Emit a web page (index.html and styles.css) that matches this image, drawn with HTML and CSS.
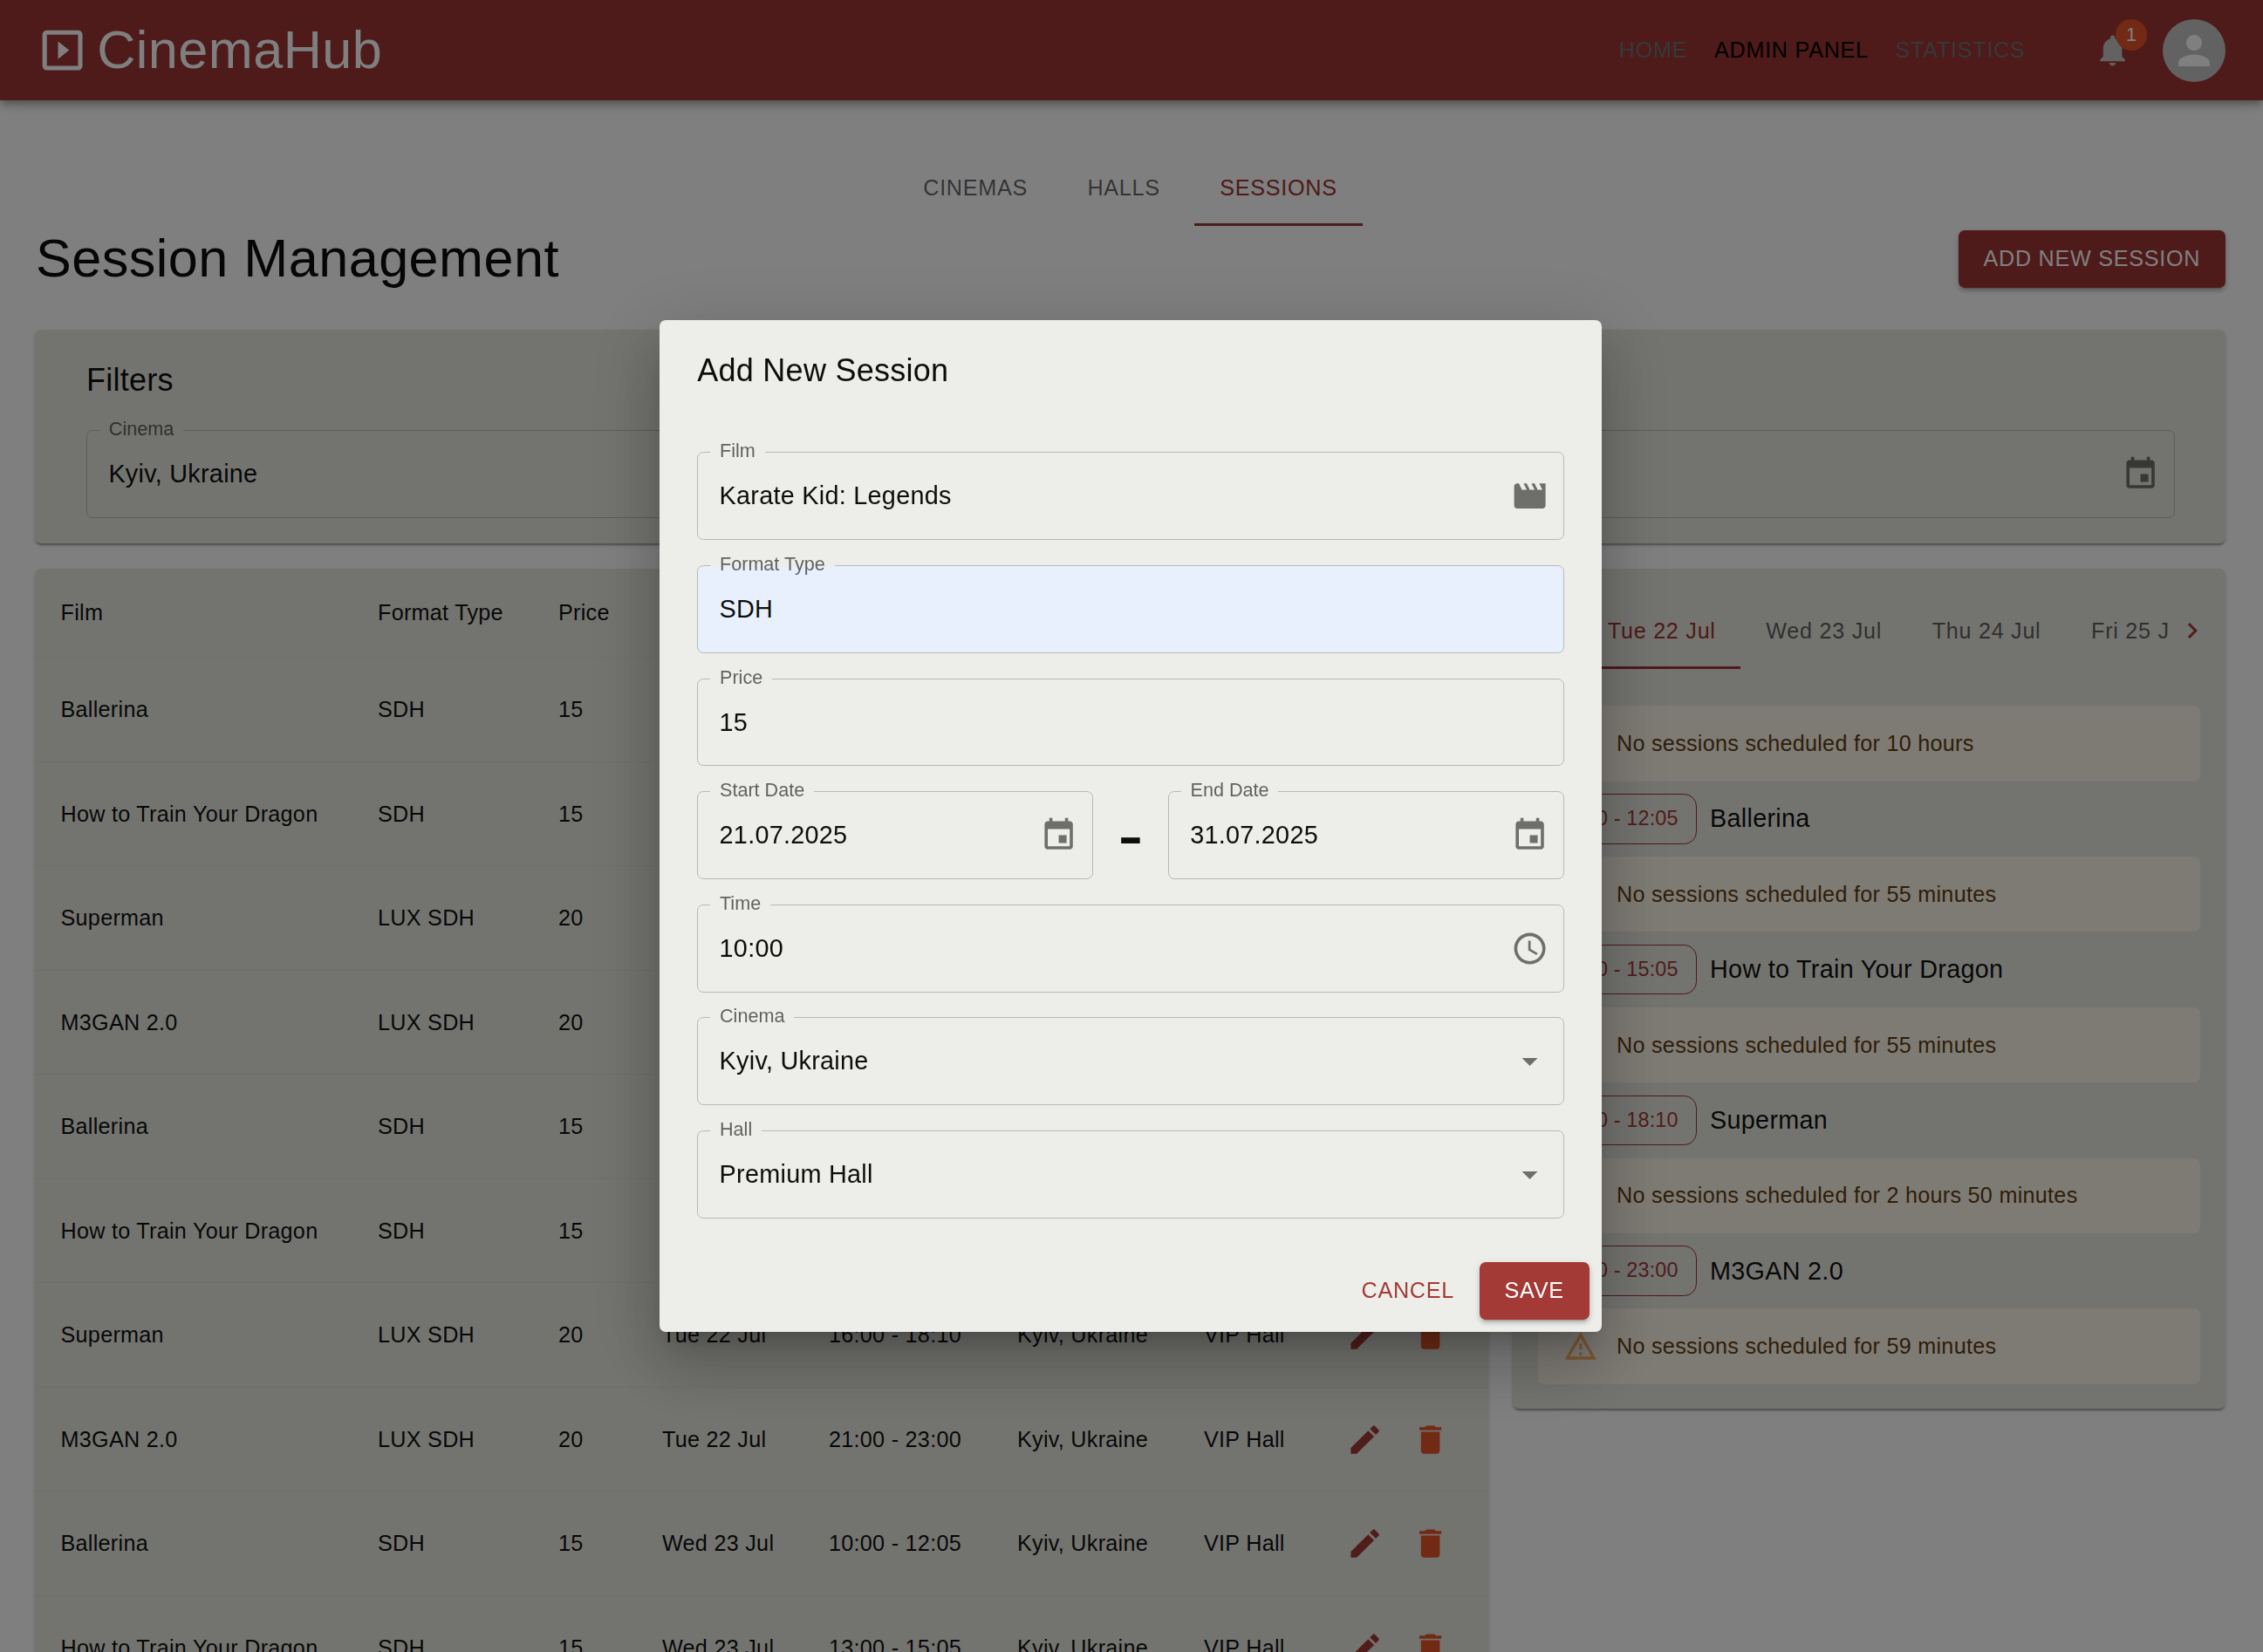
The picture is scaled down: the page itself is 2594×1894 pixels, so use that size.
FILE: index.html
```html
<!DOCTYPE html>
<html lang="en">
<head>
    <meta charset="UTF-8">
    <meta name="viewport" content="width=device-width, initial-scale=1.0">
    <title>CinemaHub - Session Management</title>
    <link rel="stylesheet" href="styles.css">
</head>
<body>

    <header class="appbar">
        <div class="logo">
            <svg class="logo-icon" viewBox="0 0 24 24"><path d="M10 8v8l5-4-5-4zm9-5H5c-1.1 0-2 .9-2 2v14c0 1.1.9 2 2 2h14c1.1 0 2-.9 2-2V5c0-1.1-.9-2-2-2zm0 16H5V5h14v14z"/></svg>
            <span class="logo-text">CinemaHub</span>
        </div>
        <nav class="topnav">
            <a class="topnav-link">Home</a>
            <a class="topnav-link topnav-active">Admin Panel</a>
            <a class="topnav-link">Statistics</a>
        </nav>
        <div class="bell">
            <svg class="icon" viewBox="0 0 24 24"><path d="M12 22c1.1 0 2-.9 2-2h-4c0 1.1.89 2 2 2zm6-6v-5c0-3.07-1.64-5.64-4.5-6.32V4c0-.83-.67-1.5-1.5-1.5s-1.5.67-1.5 1.5v.68C7.63 5.36 6 7.92 6 11v5l-2 2v1h16v-1l-2-2z"/></svg>
            <span class="badge">1</span>
        </div>
        <div class="avatar">
            <svg class="avatar-icon" viewBox="0 0 24 24"><path d="M12 12c2.21 0 4-1.79 4-4s-1.79-4-4-4-4 1.79-4 4 1.79 4 4 4zm0 2c-2.67 0-8 1.34-8 4v2h16v-2c0-2.66-5.33-4-8-4z"/></svg>
        </div>
    </header>

    <main class="page">
        <div class="section-tabs">
            <a class="section-tab">Cinemas</a>
            <a class="section-tab">Halls</a>
            <a class="section-tab section-tab-active">Sessions</a>
        </div>

        <div class="title-row">
            <h1>Session Management</h1>
            <button class="btn btn-add btn-raised" type="button">Add New Session</button>
        </div>

        <section class="card filters">
            <h2>Filters</h2>
            <div class="filters-grid">
                <div class="field">
                    <span class="field-label">Cinema</span>
                    <span class="field-value">Kyiv, Ukraine</span>
                </div>
                <div class="field">
                    <span class="field-label">Hall</span>
                    <span class="field-value">VIP Hall</span>
                </div>
                <div class="field">
                    <span class="field-label">Date</span>
                    <span class="field-value"></span>
                    <svg class="icon" viewBox="0 0 24 24"><path d="M17 12h-5v5h5v-5zM16 1v2H8V1H6v2H5c-1.11 0-1.99.9-1.99 2L3 19c0 1.1.89 2 2 2h14c1.1 0 2-.9 2-2V5c0-1.1-.9-2-2-2h-1V1h-2zm3 18H5V8h14v11z"/></svg>
                </div>
            </div>
        </section>

        <div class="columns">
            <section class="card table-card">
                <table class="sessions">
                    <colgroup>
                        <col class="col-film"><col class="col-format"><col class="col-price"><col class="col-date">
                        <col class="col-time"><col class="col-cinema"><col class="col-hall"><col class="col-actions">
                    </colgroup>
                    <thead>
                        <tr><th>Film</th><th>Format Type</th><th>Price</th><th>Date</th><th>Time</th><th>Cinema</th><th>Hall</th><th>Actions</th></tr>
                    </thead>
                    <tbody id="sessionRows"></tbody>
                </table>
            </section>

            <section class="card day-card">
                <div class="day-tabs">
                    <div class="day-tabs-scroller">
                        <a class="day-tab day-tab-active">Tue 22 Jul</a>
                        <a class="day-tab">Wed 23 Jul</a>
                        <a class="day-tab">Thu 24 Jul</a>
                        <a class="day-tab">Fri 25 Jul</a>
                    </div>
                    <div class="day-tabs-next">
                        <svg class="chevron" viewBox="0 0 24 24"><path d="M10 6 8.59 7.41 13.17 12l-4.58 4.59L10 18l6-6z"/></svg>
                    </div>
                </div>
                <div class="timeline" id="timeline"></div>
            </section>
        </div>
    </main>

    <div class="overlay">
        <div class="modal">
            <h2 class="modal-title">Add New Session</h2>
            <form class="modal-form">
                <div class="field">
                    <span class="field-label">Film</span>
                    <span class="field-value">Karate Kid: Legends</span>
                    <svg class="icon" viewBox="0 0 24 24"><path d="m18 4 2 4h-3l-2-4h-2l2 4h-3l-2-4H8l2 4H7L5 4H4c-1.1 0-1.99.9-1.99 2L2 18c0 1.1.9 2 2 2h16c1.1 0 2-.9 2-2V4h-4z"/></svg>
                </div>
                <div class="field field-autofill">
                    <span class="field-label">Format Type</span>
                    <span class="field-value">SDH</span>
                </div>
                <div class="field">
                    <span class="field-label">Price</span>
                    <span class="field-value">15</span>
                </div>
                <div class="date-range">
                    <div class="field">
                        <span class="field-label">Start Date</span>
                        <span class="field-value">21.07.2025</span>
                        <svg class="icon" viewBox="0 0 24 24"><path d="M17 12h-5v5h5v-5zM16 1v2H8V1H6v2H5c-1.11 0-1.99.9-1.99 2L3 19c0 1.1.89 2 2 2h14c1.1 0 2-.9 2-2V5c0-1.1-.9-2-2-2h-1V1h-2zm3 18H5V8h14v11z"/></svg>
                    </div>
                    <span class="date-dash">-</span>
                    <div class="field">
                        <span class="field-label">End Date</span>
                        <span class="field-value">31.07.2025</span>
                        <svg class="icon" viewBox="0 0 24 24"><path d="M17 12h-5v5h5v-5zM16 1v2H8V1H6v2H5c-1.11 0-1.99.9-1.99 2L3 19c0 1.1.89 2 2 2h14c1.1 0 2-.9 2-2V5c0-1.1-.9-2-2-2h-1V1h-2zm3 18H5V8h14v11z"/></svg>
                    </div>
                </div>
                <div class="field">
                    <span class="field-label">Time</span>
                    <span class="field-value">10:00</span>
                    <svg class="icon" viewBox="0 0 24 24"><path d="M11.99 2C6.47 2 2 6.48 2 12s4.47 10 9.99 10C17.52 22 22 17.52 22 12S17.52 2 11.99 2zM12 20c-4.42 0-8-3.58-8-8s3.58-8 8-8 8 3.58 8 8-3.58 8-8 8z"/><path d="M12.5 7H11v6l5.25 3.15.75-1.23-4.5-2.67z"/></svg>
                </div>
                <div class="field">
                    <span class="field-label">Cinema</span>
                    <span class="field-value">Kyiv, Ukraine</span>
                    <svg class="icon" viewBox="0 0 24 24"><path d="M7 10l5 5 5-5z"/></svg>
                </div>
                <div class="field">
                    <span class="field-label">Hall</span>
                    <span class="field-value">Premium Hall</span>
                    <svg class="icon" viewBox="0 0 24 24"><path d="M7 10l5 5 5-5z"/></svg>
                </div>
            </form>
            <div class="modal-actions">
                <button class="btn btn-text" type="button">Cancel</button>
                <button class="btn btn-filled btn-raised" type="button">Save</button>
            </div>
        </div>
    </div>

    <script src="app.js"></script>
</body>
</html>
```

FILE: styles.css
```css
* {
    box-sizing: border-box;
}
html, body {
    height: 100%;
}
body {
    margin: 0;
    overflow: hidden;
    background-color: #fff;
    color: rgba(0, 0, 0, 0.95);
    font-family: 'Liberation Sans', Arial, sans-serif;
    font-size: 28.8px;
    letter-spacing: 0.27px;
}
h1, h2 {
    margin: 0;
    font-weight: 400;
}
.icon {
    width: 43.2px;
    height: 43.2px;
    flex-shrink: 0;
    fill: currentColor;
}

/* app bar */
.appbar {
    display: flex;
    align-items: center;
    height: 115.2px;
    padding: 0 43px 0 41px;
    background-color: #9c3434;
    box-shadow: 0 4px 7px -2px rgba(0, 0, 0, 0.2), 0 7px 9px 0 rgba(0, 0, 0, 0.14), 0 2px 18px 0 rgba(0, 0, 0, 0.12);
    position: relative;
}
.logo {
    display: flex;
    align-items: center;
    gap: 9px;
    color: #fff;
}
.logo-icon {
    width: 61.2px;
    height: 61.2px;
    fill: currentColor;
}
.logo-text {
    font-size: 61.2px;
    letter-spacing: 0.45px;
    line-height: 70px;
    margin-top: -2px;
}
.topnav {
    display: flex;
    gap: 2px;
    margin-left: auto;
    margin-right: 50px;
}
.topnav-link {
    padding: 10.8px 14.4px;
    font-size: 25.2px;
    letter-spacing: 0.72px;
    text-transform: uppercase;
    color: #6c7272;
}
.topnav-active {
    color: #000;
}
.bell {
    position: relative;
    display: flex;
    width: 72px;
    height: 72px;
    align-items: center;
    justify-content: center;
    margin-right: 21px;
    color: #c4c4c4;
}
.badge {
    position: absolute;
    top: 0;
    right: -3px;
    width: 36px;
    height: 36px;
    border-radius: 50%;
    background-color: #e4542a;
    color: #fff;
    font-size: 21.6px;
    letter-spacing: 0;
    line-height: 36px;
    text-align: center;
}
.avatar {
    display: flex;
    width: 72px;
    height: 72px;
    align-items: center;
    justify-content: center;
    border-radius: 50%;
    background-color: #c4c4c4;
}
.avatar-icon {
    width: 54px;
    height: 54px;
    fill: #fff;
}

/* page */
.page {
    padding: 57.6px 43px 0 40px;
}
.section-tabs {
    display: flex;
    justify-content: center;
    gap: 10.8px;
}
.section-tab {
    height: 86.4px;
    padding: 0 28.8px;
    line-height: 84px;
    font-size: 25.2px;
    letter-spacing: 0.72px;
    text-transform: uppercase;
    color: rgba(0, 0, 0, 0.6);
}
.section-tab-active {
    color: #9c3434;
    border-bottom: 3.6px solid #9c3434;
}
.title-row {
    display: flex;
    align-items: center;
    justify-content: space-between;
    height: 75.6px;
    margin-bottom: 43.2px;
}
h1 {
    padding-left: 1px;
    margin-top: -1px;
    font-size: 61.2px;
    letter-spacing: 0.45px;
}
.btn {
    height: 65.7px;
    padding: 0 28.8px;
    border: none;
    border-radius: 7.2px;
    font-family: inherit;
    font-size: 25.2px;
    letter-spacing: 0.72px;
    text-transform: uppercase;
}
.btn-filled {
    background-color: #a33a36;
    color: #fff;
}
.btn-add {
    background-color: #9c3434;
    color: #fff;
}
.btn-raised {
    box-shadow: 0 5px 2px -4px rgba(0, 0, 0, 0.2), 0 4px 4px 0 rgba(0, 0, 0, 0.14), 0 2px 9px 0 rgba(0, 0, 0, 0.12);
}
.btn-text {
    padding: 0 14.4px;
    background: none;
    color: #a33a36;
}
.card {
    background-color: #e6e7e0;
    border-radius: 7.2px;
    box-shadow: 0 4px 2px -2px rgba(0, 0, 0, 0.2), 0 2px 2px 0 rgba(0, 0, 0, 0.14), 0 2px 5px 0 rgba(0, 0, 0, 0.12);
}

/* filters */
.filters {
    padding: 28.8px 58px 29px 59px;
    margin-bottom: 29px;
    --field-bg: #e6e7e0;
}
.filters h2 {
    font-size: 36px;
    letter-spacing: 0.27px;
    line-height: 57.6px;
    margin-bottom: 28.8px;
}
.filters-grid {
    display: grid;
    grid-template-columns: repeat(3, 1fr);
    gap: 28.8px;
}
.filters .field {
    padding-right: 17px;
}

/* outlined fields */
.field {
    position: relative;
    display: flex;
    align-items: center;
    justify-content: space-between;
    height: 100.8px;
    padding: 0 17px 0 24.4px;
    border: 1.8px solid #b8b9b4;
    border-radius: 7.2px;
    color: #6e6f6b;
}
.field-label {
    position: absolute;
    top: -14px;
    left: 14px;
    padding: 0 10.8px;
    line-height: 24px;
    font-size: 21.6px;
    letter-spacing: 0;
    color: rgba(0, 0, 0, 0.6);
    background: linear-gradient(var(--field-bg, #edeee9) 62%, transparent 62%);
}
.field-value {
    color: rgba(0, 0, 0, 0.95);
}
.field-autofill {
    background-color: #e8f0fe;
}

/* sessions table */
.columns {
    display: grid;
    grid-template-columns: 1666px 817px;
    gap: 28px;
    align-items: start;
}
.sessions {
    width: 100%;
    table-layout: fixed;
    border-collapse: collapse;
    font-size: 25.2px;
    letter-spacing: 0.27px;
}
.col-film { width: 363.5px; }
.col-format { width: 207px; }
.col-price { width: 119px; }
.col-date { width: 191px; }
.col-time { width: 216px; }
.col-cinema { width: 214px; }
.col-hall { width: 149px; }
.col-actions { width: 206.5px; }
.sessions th, .sessions td {
    padding: 0 0 0 29.5px;
    text-align: left;
    font-weight: 400;
    white-space: nowrap;
    border-bottom: 1.8px solid #dcdcd8;
}
.sessions th {
    height: 102px;
}
.sessions td {
    height: 119.5px;
}
.row-actions {
    display: flex;
    gap: 2.4px;
}
.icon-btn {
    display: flex;
    width: 72px;
    height: 72px;
    align-items: center;
    justify-content: center;
}
.icon-edit {
    color: #a33a36;
}
.icon-delete {
    color: #e4542a;
}

/* day schedule */
.day-card {
    padding: 29px 29px 28px 29px;
}
.day-tabs {
    display: flex;
    margin: 0 -17px 42px 51px;
}
.day-tabs-scroller {
    display: flex;
    flex: 1;
    min-width: 0;
    overflow: hidden;
}
.day-tab {
    height: 86.4px;
    padding: 0 28.8px;
    flex-shrink: 0;
    line-height: 84px;
    font-size: 25.2px;
    letter-spacing: 0.72px;
    color: rgba(0, 0, 0, 0.6);
}
.day-tab-active {
    color: #9c3434;
    border-bottom: 3.6px solid #9c3434;
}
.day-tabs-next {
    display: flex;
    width: 52px;
    height: 84px;
    flex-shrink: 0;
    align-items: center;
    justify-content: center;
    color: #a33a36;
}
.chevron {
    width: 36px;
    height: 36px;
    fill: currentColor;
}
.timeline {
    display: flex;
    flex-direction: column;
    gap: 14.4px;
}
.notice {
    display: flex;
    align-items: center;
    gap: 21.6px;
    height: 86.4px;
    padding: 0 28.8px;
    border-radius: 7.2px;
    background-color: #fcf6ea;
    color: #5e3c10;
    font-size: 25.2px;
}
.notice-icon {
    width: 39.6px;
    height: 39.6px;
    fill: #f9b162;
}
.slot {
    display: flex;
    align-items: center;
    gap: 15.5px;
    height: 57.6px;
}
.slot-time {
    height: 57.6px;
    padding: 0 20px;
    border: 1.8px solid #9c3434;
    border-radius: 14.4px;
    color: #a33a36;
    font-size: 23.4px;
    letter-spacing: 0.13px;
    line-height: 54px;
}

/* add session dialog */
.overlay {
    position: fixed;
    top: 0;
    right: 0;
    bottom: 0;
    left: 0;
    display: flex;
    align-items: center;
    justify-content: center;
    padding-right: 2px;
    background-color: rgba(0, 0, 0, 0.5);
}
.modal {
    width: 1080px;
    padding: 28.8px 14.4px 14.4px;
    background-color: #edeee9;
    border-radius: 7.2px;
    box-shadow: 0 20px 27px -13px rgba(0, 0, 0, 0.2), 0 43px 68px 5px rgba(0, 0, 0, 0.14), 0 16px 83px 14px rgba(0, 0, 0, 0.12);
}
.modal-title {
    padding: 0 28.8px;
    font-size: 36px;
    letter-spacing: 0.27px;
    line-height: 57.6px;
}
.modal-form {
    display: flex;
    flex-direction: column;
    gap: 28.8px;
    padding: 65px 28.8px 50px;
}
.date-range {
    display: flex;
    align-items: center;
}
.date-range .field {
    flex: 1;
}
.date-dash {
    width: 85.5px;
    text-align: center;
    font-size: 88px;
    letter-spacing: 0;
    line-height: 100.8px;
}
.modal-actions {
    display: flex;
    justify-content: flex-end;
    gap: 14.4px;
}
```

FILE: app.js
```js
const films = [
    { film: "Ballerina", format: "SDH", price: 15, time: "10:00 - 12:05" },
    { film: "How to Train Your Dragon", format: "SDH", price: 15, time: "13:00 - 15:05" },
    { film: "Superman", format: "LUX SDH", price: 20, time: "16:00 - 18:10" },
    { film: "M3GAN 2.0", format: "LUX SDH", price: 20, time: "21:00 - 23:00" }
];
const days = ["Mon 21 Jul", "Tue 22 Jul", "Wed 23 Jul"];
const editIcon = '<svg class="icon" viewBox="0 0 24 24"><path d="M3 17.25V21h3.75L17.81 9.94l-3.75-3.75L3 17.25zM20.71 7.04c.39-.39.39-1.02 0-1.41l-2.34-2.34a.9959.9959 0 0 0-1.41 0l-1.83 1.83 3.75 3.75 1.83-1.83z"/></svg>';
const deleteIcon = '<svg class="icon" viewBox="0 0 24 24"><path d="M6 19c0 1.1.9 2 2 2h8c1.1 0 2-.9 2-2V7H6v12zM19 4h-3.5l-1-1h-5l-1 1H5v2h14V4z"/></svg>';
const warningIcon = '<svg class="notice-icon" viewBox="0 0 24 24"><path d="M12 5.99 19.53 19H4.47L12 5.99M12 2 1 21h22L12 2zm1 14h-2v2h2v-2zm0-6h-2v4h2v-4z"/></svg>';

const rows = document.getElementById("sessionRows");
for (let i = 0; i < 10; i++) {
    const s = films[i % 4];
    const day = days[Math.floor(i / 4)];
    const row = rows.insertRow();
    row.innerHTML = `<td>${s.film}</td><td>${s.format}</td><td>${s.price}</td><td>${day}</td><td>${s.time}</td>` +
        `<td>Kyiv, Ukraine</td><td>VIP Hall</td>` +
        `<td><div class="row-actions"><span class="icon-btn icon-edit">${editIcon}</span><span class="icon-btn icon-delete">${deleteIcon}</span></div></td>`;
}

const gaps = ["10 hours", "55 minutes", "55 minutes", "2 hours 50 minutes", "59 minutes"];
const timeline = document.getElementById("timeline");
let html = "";
gaps.forEach((gap, i) => {
    html += `<div class="notice">${warningIcon}<span>No sessions scheduled for ${gap}</span></div>`;
    if (films[i]) {
        html += `<div class="slot"><span class="slot-time">${films[i].time}</span><span>${films[i].film}</span></div>`;
    }
});
timeline.innerHTML = html;
```
